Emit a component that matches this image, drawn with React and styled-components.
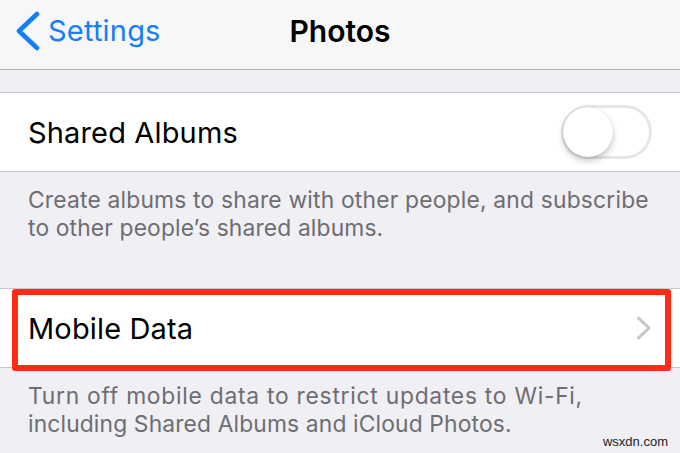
import React from "react";
import styled, { createGlobalStyle } from "styled-components";

const Global = createGlobalStyle`
  html, body { margin: 0; padding: 0; }
  body {
    background: #efeff4;
    font-family: Inter, "Liberation Sans", sans-serif;
    -webkit-font-smoothing: antialiased;
  }
`;

const Page = styled.div`
  position: relative;
  width: 680px;
  height: 453px;
  overflow: hidden;
  background: #efeff4;
`;

const NavBar = styled.div`
  height: 69px;
  background: #f7f7f7;
  border-bottom: 1px solid #b4b4b4;
  display: grid;
  grid-template-columns: 1fr auto 1fr;
  align-items: center;
`;

const BackButton = styled.div`
  display: flex;
  align-items: center;
  gap: 8px;
  padding-left: 16px;
  color: #157efb;
  font-size: 29px;
  letter-spacing: 0.2px;
  margin-top: -8px;
`;

const Title = styled.div`
  font-size: 30px;
  font-weight: 600;
  color: #000;
  margin-top: -8px;
`;

const Spacer = styled.div`
  height: 22px;
`;

const Group = styled.div`
  background: #fff;
  border-top: 1px solid #c8c7cc;
  border-bottom: 1px solid #c8c7cc;
`;

const Row = styled.div`
  position: relative;
  height: 78px;
  display: flex;
  align-items: center;
  justify-content: space-between;
  padding: 0 28px;
`;

const Label = styled.div`
  font-size: 29px;
  color: #000;
  letter-spacing: 0.15px;
`;

const Footer = styled.div`
  padding: 14px 28px ${(p) => p.$bottom}px;
  font-size: 22.8px;
  line-height: 27.5px;
  color: #6d6d72;
`;

const Line = styled.div`
  white-space: nowrap;
  letter-spacing: ${(p) => p.$spacing ?? 0.15}px;
`;

const Toggle = styled.div`
  position: relative;
  width: 85px;
  height: 48px;
  border: 3px solid #e5e5ea;
  border-radius: 30px;
  background: #fff;
  box-sizing: content-box;
`;

const Knob = styled.div`
  position: absolute;
  top: -1px;
  left: -1px;
  width: 50px;
  height: 50px;
  border-radius: 50%;
  background: #fff;
  box-shadow: 0 4px 6px rgba(0, 0, 0, 0.22), 0 0 1px rgba(0, 0, 0, 0.18);
`;

const Highlight = styled.div`
  position: absolute;
  top: 0;
  left: 12px;
  right: 9px;
  bottom: -4px;
  border: 6px solid #ff2b16;
  border-radius: 3px;
  pointer-events: none;
`;

const Watermark = styled.div`
  position: absolute;
  right: 12px;
  bottom: 4px;
  font-family: "Liberation Sans", Arial, sans-serif;
  font-size: 13px;
  color: #222;
`;

const BackChevron = () => (
  <svg width="24" height="40" viewBox="0 0 24 40">
    <polyline
      points="21,3 3,20 21,37"
      fill="none"
      stroke="#157efb"
      strokeWidth="4.6"
      strokeLinecap="round"
      strokeLinejoin="round"
    />
  </svg>
);

const Disclosure = () => (
  <svg width="16" height="24" viewBox="0 0 16 24">
    <polyline
      points="2.5,2 13,12 2.5,22"
      fill="none"
      stroke="#c4c4c9"
      strokeWidth="3"
      strokeLinecap="round"
      strokeLinejoin="round"
    />
  </svg>
);

export default function App() {
  return (
    <Page>
      <Global />
      <NavBar>
        <BackButton>
          <BackChevron />
          Settings
        </BackButton>
        <Title>Photos</Title>
        <div />
      </NavBar>
      <Spacer />
      <Group>
        <Row>
          <Label>Shared Albums</Label>
          <Toggle>
            <Knob />
          </Toggle>
        </Row>
      </Group>
      <Footer $bottom={47}>
        <Line $spacing={0.2}>Create albums to share with other people, and subscribe</Line>
        <Line>to other people’s shared albums.</Line>
      </Footer>
      <Group>
        <Row>
          <Label>Mobile Data</Label>
          <Disclosure />
          <Highlight />
        </Row>
      </Group>
      <Footer $bottom={20}>
        <Line $spacing={0.75}>Turn off mobile data to restrict updates to Wi-Fi,</Line>
        <Line>including Shared Albums and iCloud Photos.</Line>
      </Footer>
      <Watermark>wsxdn.com</Watermark>
    </Page>
  );
}
